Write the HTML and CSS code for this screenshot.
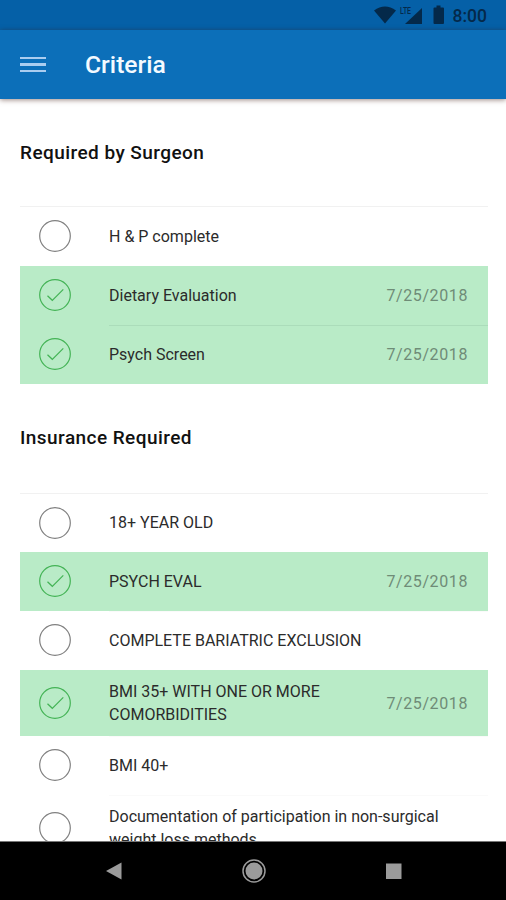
FILE: index.html
```
<!DOCTYPE html>
<html lang="en">

<head>
  <meta charset="UTF-8" />
  <meta name="viewport" content="width=device-width, initial-scale=1.0" />
  <title>Criteria</title>
  <link rel="stylesheet" href="styles.css">
</head>

<body>

  <div class="status-bar">
    <svg class="status-icons" width="74" height="30" viewBox="0 0 74 30">
      <path d="M0 10.5Q11 2.500 22 10.500L11 23.500Z" />
      <path d="M48 8V24H31Z" />
      <path d="M59.500 8.500Q59.500 7.500 60.500 7.500H62.500V5.500H66.500V7.500H69Q70 7.500 70 8.500V23Q70 24 69 24H60.500Q59.500 24 59.500 23Z" />
      <text x="26" y="14" class="lte" textLength="11" lengthAdjust="spacingAndGlyphs">LTE</text>
    </svg>
    <span class="clock">8:00</span>
  </div>

  <header class="toolbar">
    <div class="menu-btn">
      <span></span>
      <span></span>
      <span></span>
    </div>
    <h1>Criteria</h1>
  </header>

  <main class="content">
    <h2>Required by Surgeon</h2>
    <ul class="list" id="surgeon-list"></ul>

    <h2>Insurance Required</h2>
    <ul class="list" id="insurance-list"></ul>
  </main>

  <nav class="nav-bar">
    <svg width="16" height="18" viewBox="0 0 16 18"><path d="M0 9L15.500 0.500V17.500Z" /></svg>
    <svg width="24" height="24" viewBox="0 0 24 24">
      <circle class="ring" cx="12" cy="12" r="11" />
      <circle cx="12" cy="12" r="8.500" />
    </svg>
    <svg width="16" height="16" viewBox="0 0 16 16"><path d="M0 0.500H15.500V16H0Z" /></svg>
  </nav>

  <script>
    const surgeon = [
      { title: 'H &amp; P complete' },
      { title: 'Dietary Evaluation', date: '7/25/2018' },
      { title: 'Psych Screen', date: '7/25/2018' },
    ];

    const insurance = [
      { title: '18+ YEAR OLD' },
      { title: 'PSYCH EVAL', date: '7/25/2018' },
      { title: 'COMPLETE BARIATRIC EXCLUSION' },
      { title: 'BMI 35+ WITH ONE OR MORE<br>COMORBIDITIES', date: '7/25/2018' },
      { title: 'BMI 40+' },
      { title: 'Documentation of participation in non-surgical<br>weight loss methods' },
    ];

    function renderList(id, items) {
      const list = document.getElementById(id);
      items.forEach(item => {
        const row = document.createElement('li');
        row.className = item.date ? 'item done' : 'item';
        row.innerHTML = `
          <svg class="check" width="32" height="32" viewBox="0 0 32 32">
            <circle cx="16" cy="16" r="15.300" />
            ${item.date ? '<path d="M8.500 16.700L13.300 21.300L24.300 10.300" />' : ''}
          </svg>
          <div class="item-inner">
            <span class="title">${item.title}</span>
            ${item.date ? `<span class="date">${item.date}</span>` : ''}
          </div>
        `;
        list.appendChild(row);
      });
    }

    renderList('surgeon-list', surgeon);
    renderList('insurance-list', insurance);
  </script>
</body>

</html>
```
FILE: styles.css
```
* {
  box-sizing: border-box;
  margin: 0;
  padding: 0;
}

body {
  display: flex;
  flex-direction: column;
  height: 900px;
  overflow: hidden;
  font-family: Roboto, sans-serif;
  color: #2b2b2b;
  background: #fff;
}

.status-bar {
  display: flex;
  flex: none;
  justify-content: flex-end;
  align-items: center;
  height: 30px;
  padding-right: 19px;
  background: #0560a7;
  color: #04294a;
}

.status-icons {
  margin-right: 5px;
  fill: #04294a;
}

.lte {
  font-size: 9px;
  font-weight: 500;
}

.clock {
  font-size: 17.500px;
  font-weight: 500;
  line-height: 30px;
  padding-top: 1px;
}

.toolbar {
  display: flex;
  flex: none;
  align-items: center;
  height: 69px;
  padding-left: 20px;
  background: #0c6fb9;
  box-shadow: 0 1px 5px rgba(60, 20, 10, 0.5);
  z-index: 1;
}

.menu-btn {
  display: flex;
  flex-direction: column;
  gap: 4px;
  width: 26px;
  margin-right: 39px;
}

.menu-btn span {
  height: 2.500px;
  background: #aacdf0;
}

.toolbar h1 {
  color: #f4faff;
  font-size: 24.700px;
  font-weight: 500;
}

.content {
  flex: 1;
  min-height: 0;
  overflow: hidden;
  padding: 0 18px 0 20px;
}

.content h2 {
  height: 107px;
  padding-top: 42px;
  color: #111;
  font-size: 19px;
  font-weight: 500;
  letter-spacing: 0.440px;
  line-height: 24px;
}

.list + h2 {
  height: 109px;
}

.list {
  list-style: none;
  border-top: 1px solid #f1f1f1;
}

.item {
  display: flex;
  align-items: center;
  min-height: 59px;
  padding-left: 19px;
}

#insurance-list .item:first-child {
  min-height: 58px;
}

.item.done {
  background: #b9ebc7;
}

.check {
  flex: none;
  margin: 0 38px 1px 0;
  fill: none;
  stroke: #808080;
  stroke-width: 1.200;
}

.done .check {
  stroke: #43b355;
}

.item-inner {
  display: flex;
  flex: 1;
  align-self: stretch;
  align-items: center;
  justify-content: space-between;
  padding: 9px 20px 10px 0;
}

.item + .item .item-inner {
  border-top: 1px solid #fafafa;
}

.item.done .item-inner {
  border-top-color: transparent;
}

.item.done + .item.done .item-inner {
  border-top-color: #abdcba;
}

.title {
  font-size: 16px;
  line-height: 23px;
  white-space: nowrap;
}

.date {
  color: #6f8c77;
  font-size: 16px;
  letter-spacing: 0.600px;
}

.nav-bar {
  display: flex;
  flex: none;
  align-items: center;
  justify-content: space-between;
  height: 59px;
  padding: 0 104px 0 106px;
  border-top: 1px solid #777;
  background: #000;
}

.nav-bar svg {
  fill: #9b9b9b;
}

.nav-bar .ring {
  fill: none;
  stroke: #9b9b9b;
  stroke-width: 1.500;
}
```
